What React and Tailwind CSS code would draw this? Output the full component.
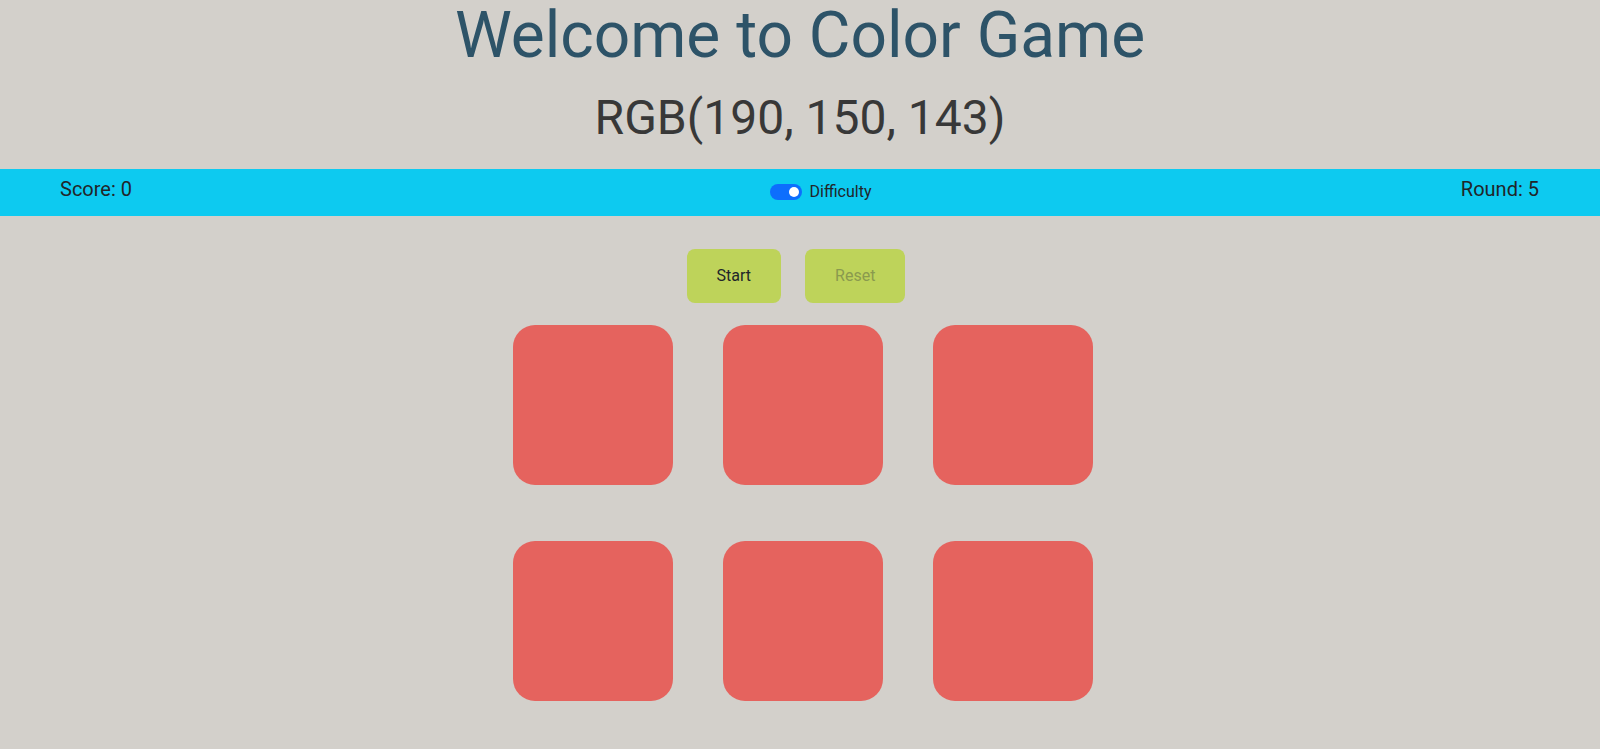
import React, { useState } from 'react';

const tiles = [0, 1, 2, 3, 4, 5];

const App = () => {
  const [hard, setHard] = useState(true);
  const [score] = useState(0);
  const [round] = useState(5);

  return (
    <div className="min-h-screen bg-[#d3d0cb] font-['Roboto',sans-serif] text-[#212529]">
      {/* Cabecera */}
      <h1 className="pt-[4px] text-center text-[64px] font-normal leading-[64px] text-[#2d5368]">
        Welcome to Color Game
      </h1>
      <h2 className="mt-[26px] text-center text-[48px] font-normal leading-[48px] text-[#383838]">
        RGB(190, 150, 143)
      </h2>

      {/* Barra de estado */}
      <div className="mt-[27px] flex h-[47px] bg-[#0dcaf0] pt-2">
        <div className="flex-1 pl-[60px] text-[20px] leading-6">Score: {score}</div>
        <div className="mt-[3px] flex flex-1 justify-center pl-[42px]">
          <label className="flex h-6 cursor-pointer items-center gap-2 text-[16px] leading-6">
            <button
              type="button"
              onClick={() => setHard(!hard)}
              className={`flex h-4 w-8 items-center rounded-full px-[3px] ${hard ? 'justify-end bg-[#0d6efd]' : 'justify-start bg-white'}`}
            >
              <span className={`h-[10px] w-[10px] rounded-full ${hard ? 'bg-white' : 'bg-gray-400'}`} />
            </button>
            <span>Difficulty</span>
          </label>
        </div>
        <div className="flex flex-1 justify-end pr-[61px] text-[20px] leading-6">Round: {round}</div>
      </div>

      {/* Botones */}
      <div className="mt-[33px] flex justify-center gap-6 pr-2">
        <button className="h-[54px] rounded-lg bg-[#bed35a] px-[30px] text-[16px] text-[#212529]">
          Start
        </button>
        <button disabled className="h-[54px] rounded-lg bg-[#bed35a] px-[30px] text-[16px] text-[#8a9a4e]">
          Reset
        </button>
      </div>

      {/* Cuadros */}
      <div className="mt-[22px] flex justify-center pl-[6px]">
        <div className="grid grid-cols-[160px_160px_160px] gap-x-[50px] gap-y-[56px]">
          {tiles.map((t) => (
            <div key={t} className="h-40 w-40 rounded-[22px] bg-[#e5635e]" />
          ))}
        </div>
      </div>
    </div>
  );
};

export default App;
